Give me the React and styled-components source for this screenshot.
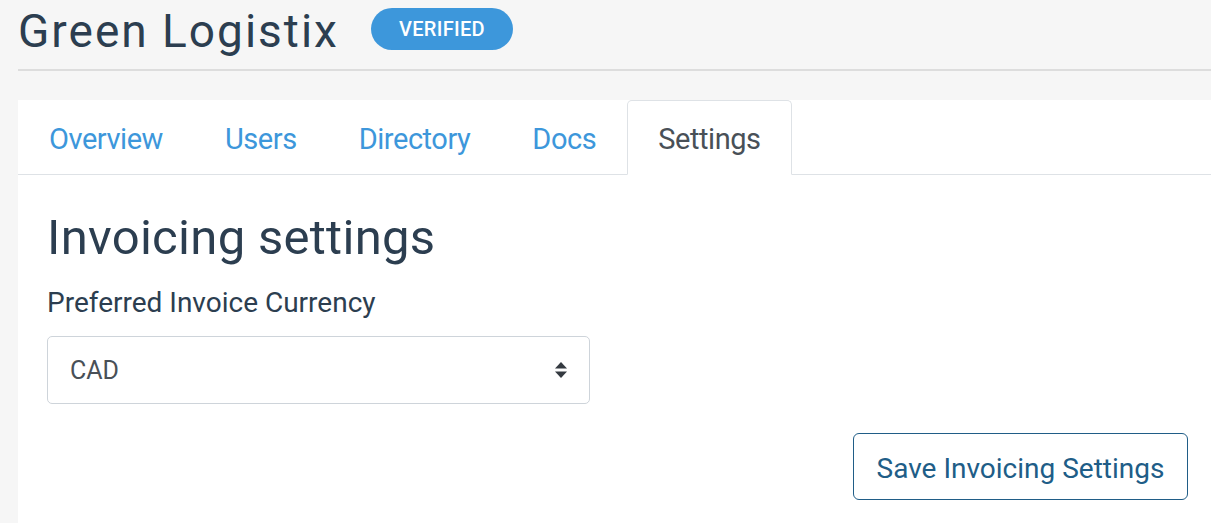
import React from 'react';
import styled, { createGlobalStyle } from 'styled-components';

const GlobalStyle = createGlobalStyle`
    html, body {
        margin: 0;
        padding: 0;
        background: #f6f6f6;
        font-family: Roboto, "Liberation Sans", sans-serif;
        overflow: hidden;
    }
`;

const Page = styled.div`
    padding: 0 0 0 18px;
    height: 523px;
    display: flex;
    flex-direction: column;
`;

const Header = styled.div`
    display: flex;
    align-items: center;
    gap: 32px;
    height: 59px;
    border-bottom: 2px solid #dddddd;
    padding-bottom: 10px;
    box-sizing: content-box;
`;

const Title = styled.h1`
    margin: 0;
    font-size: 46px;
    font-weight: 400;
    color: #2c3e50;
    letter-spacing: 2px;
    margin-top: 2px;
`;

const Badge = styled.span`
    display: inline-flex;
    align-items: center;
    justify-content: center;
    width: 142px;
    height: 42px;
    border-radius: 21px;
    background: #3d97db;
    color: #fff;
    font-size: 20px;
    font-weight: 500;
    letter-spacing: 0.3px;
    align-self: flex-start;
    margin-top: 8px;
`;

const Panel = styled.div`
    margin-top: 29px;
    flex: 1;
    background: #fff;
`;

const Tabs = styled.div`
    display: flex;
    border-bottom: 1px solid #dee2e6;
    height: 74px;
`;

const Tab = styled.div`
    padding: 3px 30px 0;
    display: flex;
    align-items: center;
    font-size: 29px;
    color: ${p => (p.$active ? '#495057' : '#3d97db')};
    border: 1px solid ${p => (p.$active ? '#dee2e6' : 'transparent')};
    border-bottom-color: ${p => (p.$active ? '#fff' : 'transparent')};
    border-radius: 5px 5px 0 0;
    background: ${p => (p.$active ? '#fff' : 'transparent')};
    margin-bottom: -1px;
    letter-spacing: -0.45px;
`;

const Content = styled.div`
    padding: 31px 23px 0 29px;
    display: flex;
    flex-direction: column;
`;

const SectionTitle = styled.h2`
    margin: 0;
    font-size: 49px;
    font-weight: 400;
    color: #2c3e50;
    line-height: 64px;
    letter-spacing: 0.3px;
`;

const Label = styled.label`
    margin-top: 17px;
    font-size: 28px;
    color: #2c3e50;
    line-height: 32px;
`;

const Select = styled.div`
    margin-top: 17px;
    width: 543px;
    height: 68px;
    box-sizing: border-box;
    border: 1px solid #ced4da;
    border-radius: 5px;
    display: flex;
    align-items: center;
    justify-content: space-between;
    padding: 0 21px 0 22px;
    font-size: 25px;
    color: #495057;
`;

const Footer = styled.div`
    display: flex;
    justify-content: flex-end;
    margin-top: 29px;
`;

const Button = styled.button`
    width: 335px;
    height: 67px;
    border: 1px solid #205d87;
    border-radius: 6px;
    background: #fff;
    color: #205d87;
    font-family: inherit;
    font-size: 28px;
    padding: 3px 0 0;
`;

const SortIcon = () => (
    <svg width="14" height="20" viewBox="0 0 14 20">
        <path d="M7 2 L13 8.5 H1 Z" fill="#343a40" />
        <path d="M7 18 L13 11.5 H1 Z" fill="#343a40" />
    </svg>
);

const tabs = ['Overview', 'Users', 'Directory', 'Docs', 'Settings'];

const App = () => (
    <>
        <GlobalStyle />
        <Page>
            <Header>
                <Title>Green Logistix</Title>
                <Badge>VERIFIED</Badge>
            </Header>
            <Panel>
                <Tabs>
                    {tabs.map(t => (
                        <Tab key={t} $active={t === 'Settings'}>{t}</Tab>
                    ))}
                </Tabs>
                <Content>
                    <SectionTitle>Invoicing settings</SectionTitle>
                    <Label>Preferred Invoice Currency</Label>
                    <Select>
                        <span>CAD</span>
                        <SortIcon />
                    </Select>
                    <Footer>
                        <Button>Save Invoicing Settings</Button>
                    </Footer>
                </Content>
            </Panel>
        </Page>
    </>
);

export default App;
